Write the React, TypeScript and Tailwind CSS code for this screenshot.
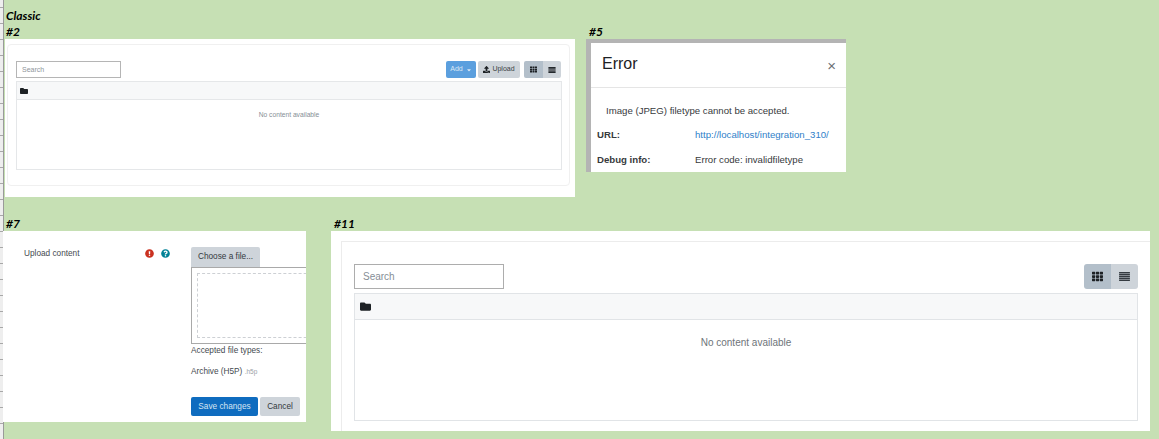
import { FaCaretDown, FaExclamationCircle, FaFolder, FaQuestionCircle, FaTh, FaUpload } from "react-icons/fa"

const sans = "font-['Liberation_Sans',Arial,sans-serif]"

function Tag({ children, className }: { children: React.ReactNode; className: string }) {
  return (
    <span className={`absolute font-['Lato',sans-serif] text-xs font-bold italic leading-none text-black ${className}`}>
      {children}
    </span>
  )
}

// stacked bars, the list view toggle
function ListIcon({ className }: { className: string }) {
  return (
    <svg viewBox="0 0 12 10" className={className} fill="currentColor">
      <rect x="0" y="0" width="12" height="1.6" />
      <rect x="0" y="2.1" width="12" height="1.6" />
      <rect x="0" y="4.2" width="12" height="1.6" />
      <rect x="0" y="6.3" width="12" height="1.6" />
      <rect x="0" y="8.4" width="12" height="1.6" />
    </svg>
  )
}

function SmallManager() {
  return (
    <div className="absolute left-[5px] top-[39px] h-[158px] w-[570px] bg-white px-[2px] pt-[5px]">
      <div className="h-[142px] w-[563px] rounded-sm border border-[#f0f0f0] px-[8px] pt-[16px]">
        <div className="flex h-[17px] items-center justify-between">
          <input
            placeholder="Search"
            className="h-[17px] w-[105px] border border-[#b5b5b5] bg-white px-[5px] text-[7px] placeholder:text-[#8f959b]"
          />
          <div className="flex h-[17px] text-[7px] text-[#3a3f44]">
            <div className="flex w-[30px] items-center justify-center gap-[3px] rounded-[2px] bg-[#5b9fde] text-[#dce9f5]">
              Add <FaCaretDown className="size-[6px]" />
            </div>
            <div className="ml-[2px] flex w-[42px] items-center justify-center gap-[2px] rounded-[2px] bg-[#ced4da]">
              <FaUpload className="size-[7px] text-[#1d2125]" /> Upload
            </div>
            <div className="ml-[4px] flex w-[19px] items-center justify-center rounded-l-[2px] bg-[#b3bfca]">
              <FaTh className="size-[7px] text-[#1d2125]" />
            </div>
            <div className="flex w-[18px] items-center justify-center rounded-r-[2px] bg-[#ced4da]">
              <ListIcon className="h-[6px] w-[8px] text-[#1d2125]" />
            </div>
          </div>
        </div>
        <div className="mt-[3px] h-[89px] w-[546px] border border-[#e5e7e9]">
          <div className="flex h-[18px] items-center border-b border-[#e5e7e9] bg-[#f7f8f9] pl-[3px]">
            <FaFolder className="size-[8px] text-[#1d2125]" />
          </div>
          <p className="pt-[10px] text-center text-[6.7px] leading-[9px] text-[#868e96]">No content available</p>
        </div>
      </div>
    </div>
  )
}

function ErrorDialog() {
  return (
    <div className="absolute left-[586px] top-[39px] h-[133px] w-[260px] border-l-[5px] border-t-[4px] border-[#b4b4b4] bg-white text-[9.63px] text-[#373a3c]">
      <div className="flex h-[45px] items-center justify-between border-b border-[#e5e5e5] pl-[11px] pr-[10px]">
        <span className="mb-[2px] text-[16px] text-[#1d2125]">Error</span>
        <span className="text-[15px] leading-none text-[#6b7075]">×</span>
      </div>
      <p className="ml-[15px] mt-[17px] leading-[12px]">Image (JPEG) filetype cannot be accepted.</p>
      <div className="ml-[6px] mt-[12px] flex leading-[12px]">
        <span className="w-[98px] font-bold">URL:</span>
        <span className="text-[#2f7fc9]">http://localhost/integration_310/</span>
      </div>
      <div className="ml-[6px] mt-[13px] flex leading-[12px]">
        <span className="w-[98px] font-bold">Debug info:</span>
        <span>Error code: invalidfiletype</span>
      </div>
    </div>
  )
}

function UploadForm() {
  return (
    <div className="absolute left-[3px] top-[231px] flex h-[191px] w-[303px] overflow-hidden bg-white text-[8.25px] text-[#454a4f]">
      <div className="flex h-[10px] w-[188px] pl-[21px] pt-[17px]">
        <span className="mt-[1px] w-[121px] leading-[10px]">Upload content</span>
        <FaExclamationCircle className="mt-[1px] size-[9px] text-[#ca3120]" />
        <FaQuestionCircle className="ml-[7px] mt-[1px] size-[9px] text-[#008196]" />
      </div>
      <div className="w-[115px] shrink-0 pt-[16px]">
        <div className="flex h-[20px] w-[69px] items-center justify-center rounded-t-[2px] bg-[#ced4da] pt-[1px] text-[#343a40]">
          Choose a file...
        </div>
        <div className="h-[77px] w-[125px] border border-[#a9a9a9] p-[5px]">
          <div className="h-full w-[130px] border border-dashed border-[#cdd0d4]" />
        </div>
        <p className="mt-[2px] leading-[10px]">Accepted file types:</p>
        <p className="mt-[11px] leading-[10px]">
          Archive (H5P) <span className="text-[6.5px] text-[#9aa0a6]">.h5p</span>
        </p>
        <div className="mt-[20px] flex h-[19px] w-[110px]">
          <div className="flex w-[67px] shrink-0 items-center justify-center rounded-[2px] bg-[#0f6cbf] pt-[1px] text-[#d5e5f3]">
            Save changes
          </div>
          <div className="ml-[2px] flex w-[40px] shrink-0 items-center justify-center rounded-[2px] bg-[#ced4da] pt-[1px] text-[#343a40]">
            Cancel
          </div>
        </div>
      </div>
    </div>
  )
}

function LargeManager() {
  return (
    <div className="absolute left-[331px] top-[231px] h-[200px] w-[819px] bg-white pl-[10px] pt-[10px]">
      <div className="h-[190px] w-[809px] border-l border-t border-[#ececec] pl-[12px] pt-[22px]">
        <div className="flex h-[25px] w-[784px] items-center justify-between">
          <input
            placeholder="Search"
            className="h-[25px] w-[150px] border border-[#adadad] bg-white px-[8px] text-[10px] placeholder:text-[#868e96]"
          />
          <div className="flex h-[25px]">
            <div className="flex w-[27px] items-center justify-center rounded-l-[3px] bg-[#b3bfca]">
              <FaTh className="size-[11px] text-[#1d2125]" />
            </div>
            <div className="flex w-[27px] items-center justify-center rounded-r-[3px] bg-[#ced4da]">
              <ListIcon className="h-[9px] w-[11px] text-[#343a40]" />
            </div>
          </div>
        </div>
        <div className="mt-[4px] h-[128px] w-[784px] border border-[#e1e4e7]">
          <div className="flex h-[26px] items-center border-b border-[#e1e4e7] bg-[#f7f8f9] pl-[5px]">
            <FaFolder className="size-[11px] text-[#1d2125]" />
          </div>
          <p className="pt-[16px] text-center text-[10px] leading-[13px] text-[#6e7479]">No content available</p>
        </div>
      </div>
    </div>
  )
}

export default function App() {
  return (
    <div className={`relative h-[439px] w-[1159px] overflow-hidden bg-[#c6e0b4] ${sans}`}>
      {/* spreadsheet row gutter */}
      <div className="absolute inset-y-0 left-0 w-[4px] border-r border-[#9a9a9a] bg-[repeating-linear-gradient(to_bottom,#eeeeee_0px,#eeeeee_7px,#a8a8a8_7px,#a8a8a8_8px,#eeeeee_8px,#eeeeee_16px)]" />

      <Tag className="left-[6px] top-[10px]">Classic</Tag>
      <Tag className="left-[6px] top-[26px]">#2</Tag>
      <Tag className="left-[589px] top-[26px]">#5</Tag>
      <Tag className="left-[6px] top-[218px]">#7</Tag>
      <Tag className="left-[334px] top-[218px]">#11</Tag>

      <SmallManager />
      <ErrorDialog />
      <UploadForm />
      <LargeManager />
    </div>
  )
}
